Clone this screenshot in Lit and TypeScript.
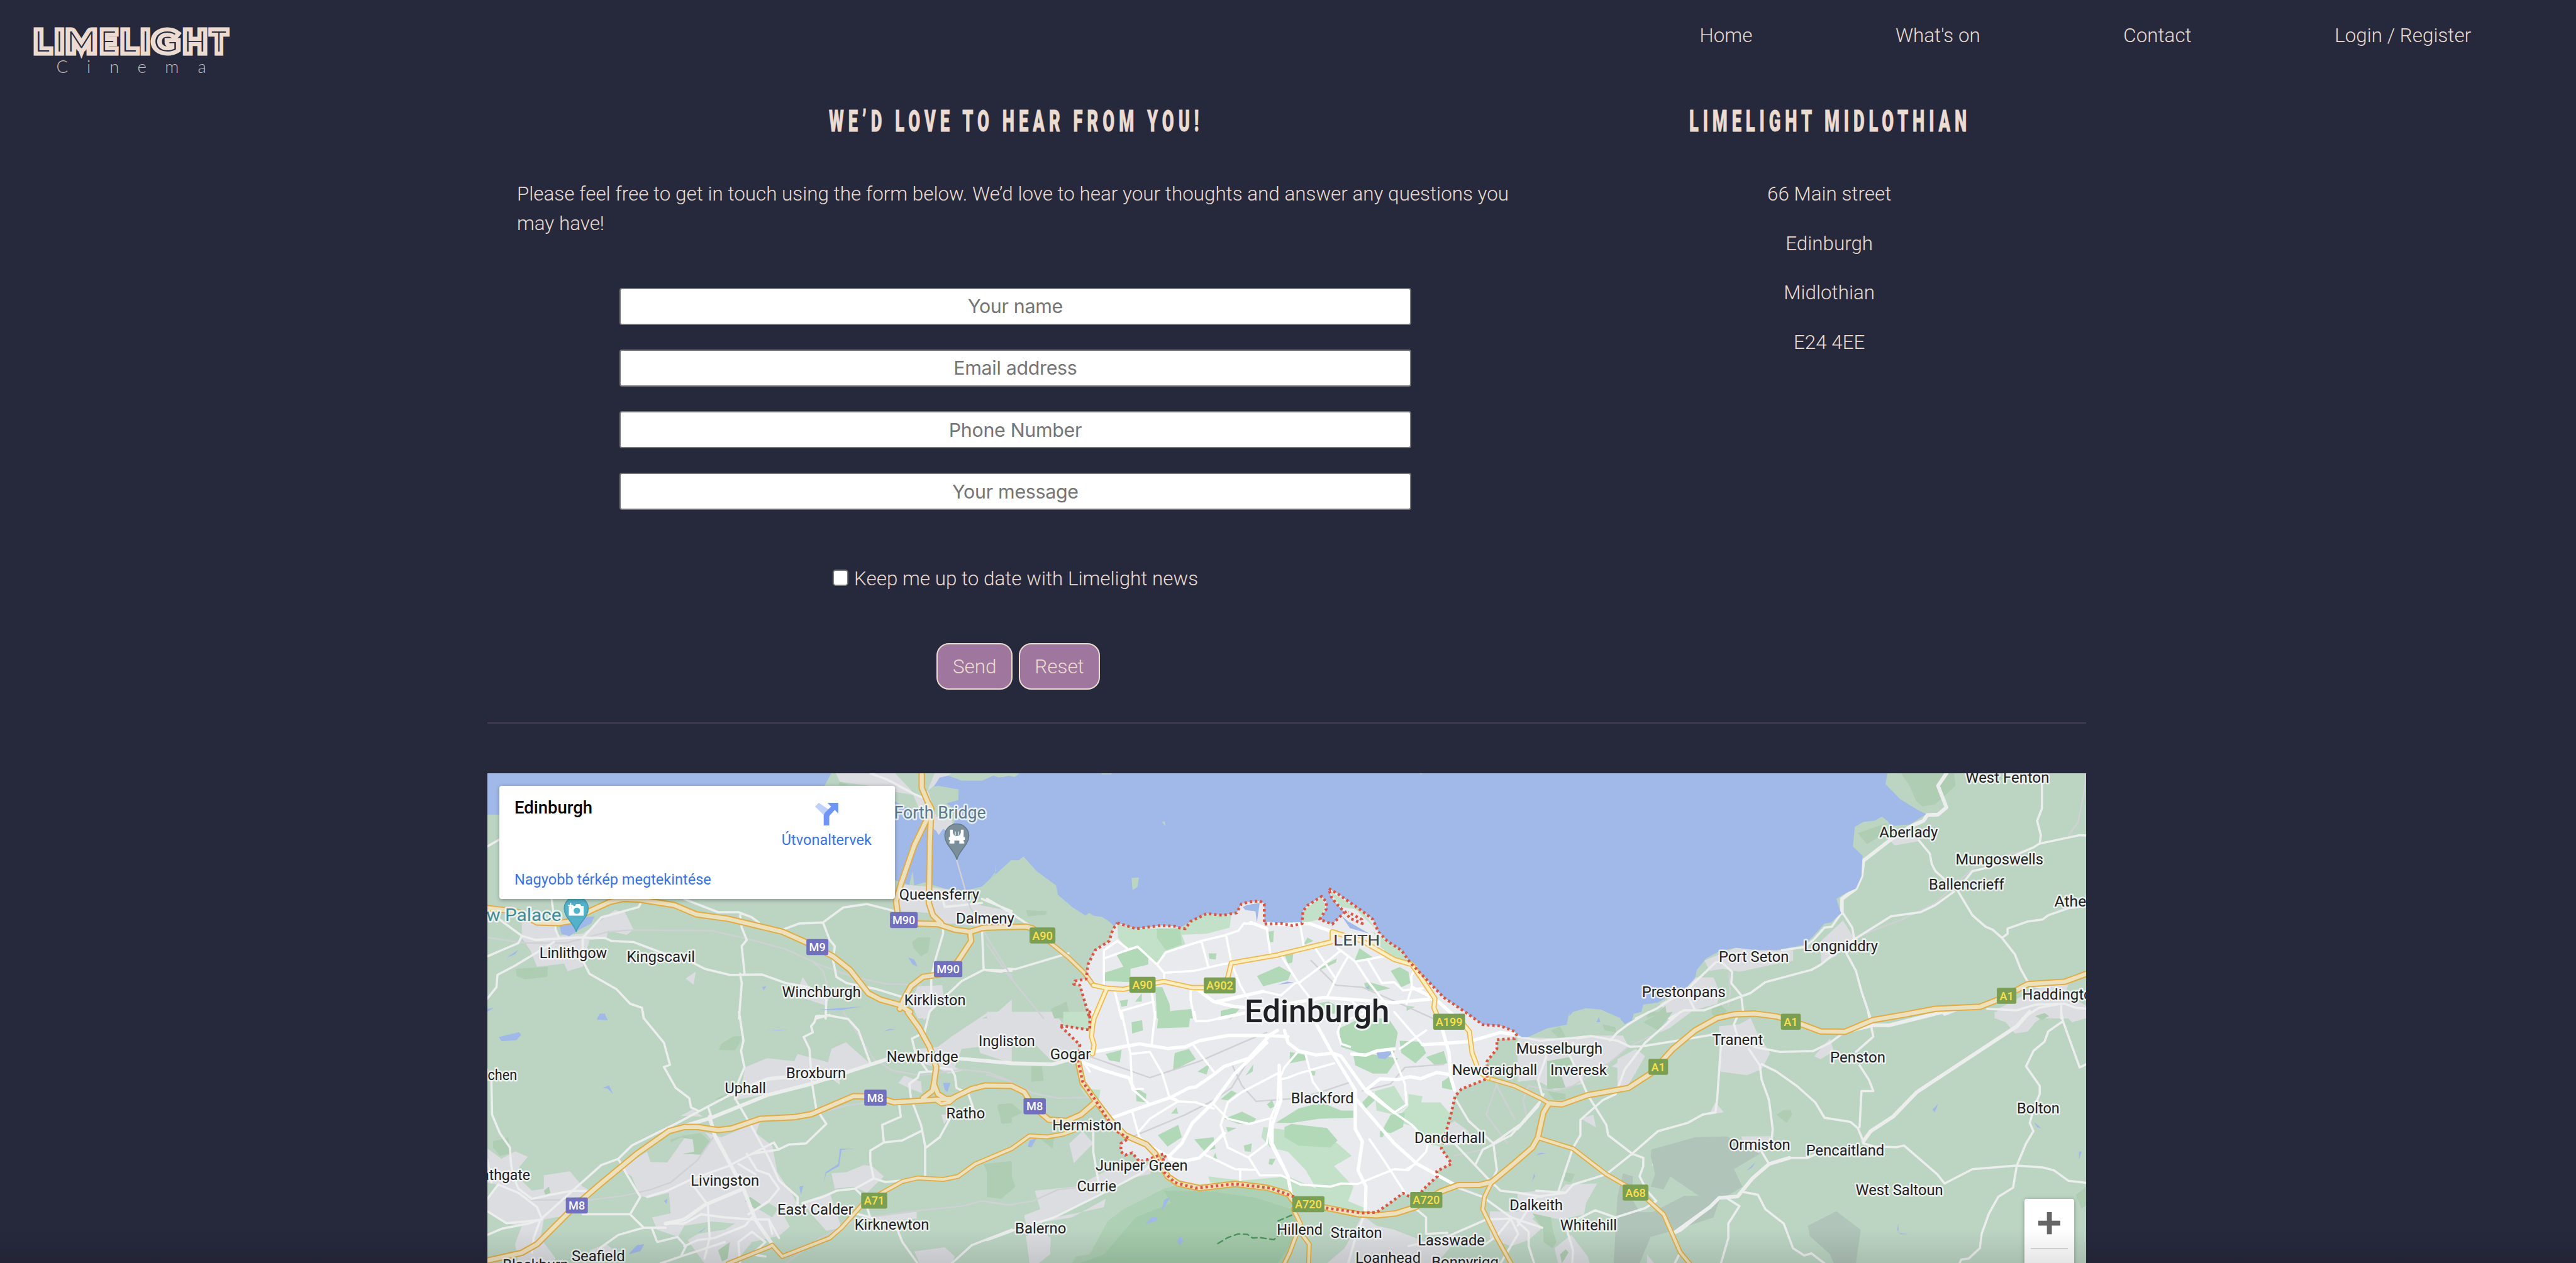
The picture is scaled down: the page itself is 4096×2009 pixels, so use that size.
import { LitElement, html, svg, css, unsafeCSS } from "lit";
import { customElement } from "lit/decorators.js";

/** Page scale: layout lengths are given on a 4176-unit wide sheet. */
const SCALE = 4096 / 4176;
const u = (n: number) => unsafeCSS(`${+(n * SCALE).toFixed(3)}px`);

/** Map survey sheets: origin and horizontal / vertical unit. */
type Sheet = [number, number, number, number];
const V = 1 / 3;
const SHEETS: Record<string, Sheet> = {
  A: [780, 1230, 860 / 1568, V],
  B: [1600, 1230, 900 / 1568, V],
  C: [2460, 1230, 940 / 1568, V],
  D: [780, 1640, 860 / 1568, V],
  E: [1600, 1640, 900 / 1568, V],
  F: [2460, 1640, 940 / 1568, V],
};
const ORIGIN = [790, 1253];

const at = (s: string, x: number, y: number): [number, number] => {
  const [ox, oy, kx, ky] = SHEETS[s];
  return [+(ox + x * kx - ORIGIN[0]).toFixed(1), +(oy + y * ky - ORIGIN[1]).toFixed(1)];
};

/** "A 1,2 3,4 B 5,6 | A ..." to an SVG path; "|" lifts the pen. */
const trace = (src: string, close = false) =>
  src
    .split("|")
    .map((part) => {
      let s = "A";
      const pts: string[] = [];
      for (const tok of part.trim().split(/\s+/)) {
        if (tok in SHEETS) s = tok;
        else {
          const [x, y] = tok.split(",").map(Number);
          pts.push(at(s, x, y).join(" "));
        }
      }
      return "M" + pts.join("L") + (close ? "Z" : "");
    })
    .join("");

const COAST_WEST =
  "A 1223,590 1265,612 1275,545 1280,615 1310,600 1370,630 1430,640 1480,620 1500,590 1522,545 1522,510 1568,490 B 0,598 23,560 26,510 65,492 90,492 103,474 140,545 195,615 200,660 240,720 278,762 288,748 300,762 325,768 345,790 360,815";
const SHORE =
  "B 368,797 420,825 490,810 530,813 545,822 560,825 575,790 620,752 665,760 705,748 718,705 740,695 770,690 783,705 783,803 830,800 862,810 890,800 892,740 905,712 945,668 958,695 958,730 940,780 975,803 1010,745 985,700 972,670 965,630 990,655 1060,740 1090,780 1105,840 1130,885 1170,930 1195,990 1240,1070 1290,1160 1350,1230 E 1350,0 1370,25 1400,62 1450,68 1490,95";
const INLAND =
  "E 1495,110 1490,130 1440,135 1440,180 1412,240 1412,325 1340,375 1322,410 1310,500 1300,560 1283,665 1312,738 1270,775 1272,800 1240,850 1225,880 1195,900 1175,882 1130,940 1100,975 1060,978 960,955 860,895 800,857 700,837 590,857 530,830 500,780 480,725 505,715 500,690 475,705 450,720 430,728 410,685 390,697 378,680 378,640 400,615 370,585 340,520 310,440 270,340 257,240 262,160 205,65 290,88 290,0 B 290,1262 262,1100 245,1095 248,1080 280,1070 285,1000 305,930 345,885 355,830 368,797";
const COAST_EAST =
  "E 1495,105 1510,122 F 0,123 28,123 80,80 133,62 140,0 C 140,1250 150,1230 185,1212 225,1218 275,1258 335,1230 340,1195 380,1185 410,1150 455,1115 480,1065 485,1025 510,970 545,935 590,918 650,930 700,930 775,903 800,860 830,800 848,795 875,750 862,680 890,650 915,630 930,570 933,470 907,425 912,330 935,305 965,300 985,280 1000,300 1010,325 1060,318 1105,268 1080,245 1035,195 995,122 1000,69";
const NORTH =
  "A 1530,69 1480,105 1420,105 1380,80 1355,90 1337,135 1350,130 1411,148 1410,200 1375,215 1395,240 1400,300 1380,350 1365,340 1352,370 1345,350 1310,300 1300,250 1265,245 1223,205";

const SEA = `${COAST_WEST} ${SHORE} ${COAST_EAST} ${NORTH} | A 18,69 1035,69 1015,128 1015,270 18,270`;
const ISLANDS =
  "B 494,305 502,303 504,327 | B 408,578 429,576 425,622 411,638 | B 35,69 92,69 78,87 60,80 46,87 | B 322,69 352,69 350,74 325,74 | B 1222,69 1228,69 1226,75 | A 1495,69 1568,69 1568,78 1530,90";

const URBAN =
  "A 1048,69 1223,69 1270,150 1310,300 1352,368 1395,330 1390,290 1345,280 1320,150 1340,69 1390,69 1330,140 1300,180 1223,160 1140,128 1060,110 | A 120,795 210,795 225,860 300,850 395,735 425,745 450,830 430,855 375,835 370,875 320,880 300,1010 255,1032 245,995 165,1010 145,930 120,870 | A 604,1068 634,1034 628,1098 | A 950,1060 970,1110 1030,1150 1020,1200 930,1150 | A 1235,610 1320,620 1400,640 1440,700 1568,740 1568,812 1490,820 1400,800 1345,800 1340,750 1240,740 1225,700 | A 1290,1105 1362,1100 1368,1160 1330,1225 1320,1262 1290,1262 1270,1180 | A 1568,1170 1530,1225 1480,1262 1568,1262 | D 1285,0 1325,0 1310,40 | D 1500,0 1568,0 1568,250 1530,230 1475,200 1470,170 1420,180 1400,270 1425,285 1380,300 1345,270 1300,250 1290,180 1350,170 1390,120 | D 1233,345 1250,310 1300,340 1303,395 1270,375 | D 745,430 770,360 780,270 845,225 925,240 935,205 1025,245 1035,180 1078,148 1148,250 1060,320 1060,355 1040,330 975,345 845,400 | D 590,505 625,475 655,510 | D 660,585 710,610 825,530 812,590 860,650 875,780 920,890 935,940 880,960 850,930 820,960 860,1000 880,950 912,1045 880,1090 800,1120 760,1200 720,1224 660,1224 610,1110 640,1080 720,1060 750,1030 680,1020 600,1040 582,1095 520,1060 505,1000 560,980 555,880 495,905 468,895 445,800 410,760 490,680 500,730 550,732 600,615 625,620 630,680 655,690 680,620 | D 185,795 262,775 300,850 330,875 320,895 260,905 255,990 185,1010 175,1100 220,1200 205,1224 110,1224 100,1130 120,1040 75,1030 18,970 18,905 50,840 18,830 18,665 60,715 100,678 138,705 115,750 100,790 150,870 185,860 | D 1035,785 1080,780 1130,745 1155,750 1190,800 1140,880 1100,850 1045,860 | D 950,925 1030,880 1065,1050 1020,1065 985,1000 | D 1170,995 1287,972 1287,1005 1170,1020 | D 1280,1165 1370,1145 1400,1190 1390,1224 1295,1224 | D 1360,500 1390,500 1368,545 | D 320,1160 370,1130 400,1170 330,1190 | E 0,0 190,0 215,60 255,150 262,200 180,235 120,130 60,160 0,200 | E 232,640 270,580 300,640 245,735 | E 135,870 250,850 340,770 470,740 460,790 400,810 300,900 190,1000 250,980 330,950 335,910 240,1000 110,1035 105,990 150,960 | E 110,1090 160,1070 180,1100 178,1180 145,1224 120,1224 | E 1010,1150 1060,990 1100,1040 1150,1060 1240,1120 1300,1080 1330,1100 1270,1224 960,1224 | E 1280,580 1320,530 1360,580 1370,640 1290,650 | E 1420,970 1520,975 1568,1050 1530,1110 1480,1140 1420,1100 | F 0,123 130,130 180,115 285,115 300,170 250,245 180,300 175,350 100,380 50,330 0,340 | F 270,230 320,180 345,215 300,355 270,380 | F 255,265 320,190 320,300 | F 545,70 600,60 630,30 650,110 683,200 660,280 620,308 548,290 | F 802,215 845,130 855,190 820,230 | F 518,500 535,440 558,488 | F 172,520 205,500 212,562 | F 605,605 690,605 650,690 620,710 | F 362,740 410,742 376,788 | F 1290,0 1440,0 1400,50 1380,95 1345,105 1320,50 1290,30 | F 1470,0 1538,0 1538,30 1500,50 | F 0,880 60,870 110,880 130,840 215,835 185,930 180,985 120,1010 50,990 20,1040 0,1010 | F 100,1150 145,1085 190,1190 195,1224 110,1224 | F 350,1180 370,1224 350,1224 | F 420,0 470,0 410,80 385,100 | C 1290,1262 1300,1215 1400,1120 1490,1095 1480,1140 1538,1200 1538,1262 | C 818,890 880,785 910,870 860,960 822,990 | C 505,980 590,918 650,930 745,930 745,980 690,1000 600,1035 555,1020 520,1030 | C 455,1115 480,1062 530,1062 548,1140 540,1190 480,1220 430,1262 405,1240 385,1190 | C 1005,395 1060,320 1085,400 1020,420";

const WOODS =
  "A 102,1020 197,1010 195,1060 130,1072 105,1055 | A 1274,890 1290,868 1328,868 1320,940 1300,960 1278,920 | A 1060,110 1090,128 1055,128 | B 110,735 170,740 165,758 115,765 | B 180,1215 225,1180 235,1262 190,1262 | D 702,185 710,155 745,120 770,118 765,150 750,188 | D 560,620 600,600 650,590 675,630 650,695 595,690 630,680 625,620 590,610 560,635 | D 35,630 80,610 85,690 55,700 35,660 | D 690,425 730,395 725,425 | D 1525,460 1568,445 1568,540 1540,545 | D 1485,740 1568,725 1568,870 1525,892 | D 185,870 200,850 205,880 190,890 | D 700,1160 735,1120 728,1200 712,1215 | D 780,920 795,900 830,940 810,960 | E 0,770 60,755 80,850 40,910 0,900 | E 30,450 70,445 100,490 40,540 | E 125,265 155,265 160,335 125,340 | E 145,610 190,600 185,665 | F 340,50 380,10 420,0 380,90 | F 90,90 115,70 130,120 110,125 | F 230,60 265,75 265,100 235,90 | F 80,240 140,220 155,250 115,290 130,370 80,375 | F 700,500 720,478 740,480 742,500 728,540 | F 80,385 130,400 130,425 100,430 | F 130,780 155,790 145,830 125,820 | F 1400,20 1425,5 1437,20 1418,40 | F 1510,890 1538,850 1538,940 1525,958 | F 40,980 90,1000 95,1060 105,1120 95,1150 70,1120 70,1060 | F 115,1180 130,1155 138,1170 120,1224 | C 1037,69 1180,69 1184,130 1130,220 1095,230 1078,205 1060,130 | C 920,360 1000,310 975,380 945,415 | C 525,1215 545,1190 567,1225 540,1262 525,1240 | C 375,1240 400,1200 405,1262 | F 350,0 400,0 350,30";

const HILLS =
  "E 250,1190 290,1180 340,1020 385,960 500,860 540,840 600,860 700,840 790,862 860,905 875,960 880,1060 860,1130 850,1224 240,1224";
const HILLS_DARK =
  "E 500,870 640,875 760,905 860,960 880,1060 850,1150 820,1224 260,1224 330,1180 420,1000 520,930";
const MOOR =
  "F 362,670 400,650 480,610 565,605 605,640 655,690 585,765 608,850 545,920 530,1000 430,1060 360,1095 330,1224 260,1224 270,900 285,785 312,800 310,910 330,975 365,975 450,895 490,895 413,800 395,865 360,850 372,790 360,700 | F 785,1040 862,970 928,1060 915,1224 855,1224 845,1180 790,1090";

const LAWNS =
  "B 368,800 420,825 545,822 575,790 620,752 690,762 685,820 620,850 550,855 560,900 500,940 480,1000 425,910 395,920 370,870 | B 890,800 892,740 945,670 955,720 940,780 | B 965,640 1060,740 1100,830 1040,730 1000,720 | B 1090,840 1170,930 1195,990 1125,950 | B 1100,900 1130,890 1190,980 1170,990 | E 780,560 870,580 940,600 990,640 1030,700 980,750 1035,850 1020,920 1075,960 1060,978 960,955 860,895 800,857 630,830 625,800 720,820 850,800 930,860 900,770 850,680 800,660 775,610 | E 1095,385 1150,360 1185,460 1150,500 1100,480 | E 1200,440 1280,440 1310,500 1290,660 1240,640 1210,560 1150,530 | E 1190,400 1230,410 1220,490 1190,480 | E 262,370 320,380 315,440 280,410 | E 215,0 285,0 288,80 210,65 250,150 215,80";

const PARKS =
  "B 365,950 425,920 455,965 455,1000 405,1020 405,1085 330,1080 330,1040 385,1010 | B 480,825 545,825 550,900 505,930 480,870 | B 626,945 648,945 646,975 628,972 | B 762,1055 825,1008 858,1040 850,1075 780,1105 | B 893,905 905,868 922,885 | B 840,950 865,945 862,990 850,995 | B 938,1015 988,970 985,990 942,1025 | B 1038,980 1052,920 1090,965 1045,985 | B 1140,1030 1165,1012 1190,1035 1195,1090 1170,1110 | B 795,840 810,835 808,890 798,890 | B 475,1110 495,1110 515,1190 520,1262 480,1262 | B 375,1175 398,1170 395,1200 380,1205 | B 418,1180 437,1140 437,1180 | B 1065,1090 1080,1085 1140,1115 1100,1130 1070,1120 | B 1185,1200 1208,1205 1185,1225 | B 925,1190 965,1180 1000,1210 980,1240 940,1230 | B 520,1225 580,1215 585,1262 510,1262 | E 485,0 575,0 570,75 480,80 | E 408,50 438,40 440,90 410,105 | E 335,205 380,185 375,245 345,235 | E 530,200 570,180 590,230 525,285 | E 595,290 630,250 620,305 | E 855,195 900,210 900,235 855,250 | E 730,310 752,255 750,290 | E 995,80 1020,60 1060,25 1135,35 1160,100 1150,200 1090,195 1060,205 1000,170 | E 1165,140 1225,145 1240,200 1210,250 1170,200 | E 1035,215 1080,205 1160,225 1130,300 1090,300 1040,260 | E 912,285 928,290 925,310 912,305 | E 420,370 450,400 448,440 422,435 | E 660,425 690,382 705,395 680,430 | E 520,495 535,465 540,495 | E 670,520 720,485 760,520 750,545 710,545 | E 815,540 880,470 945,440 1000,480 1035,480 1035,515 940,520 860,540 | E 840,560 860,545 960,565 990,625 970,660 880,650 840,610 | E 482,600 540,550 550,610 510,655 | E 585,620 640,610 645,665 615,680 | E 725,650 748,640 745,680 728,678 | E 795,740 798,715 815,715 805,745 | E 635,720 645,685 650,715 | E 1060,440 1090,385 1095,430 1070,470 | E 1115,580 1140,500 1180,490 1175,560 1140,590 | E 1110,610 1110,580 1125,575 1118,608 | E 1240,220 1290,190 1300,250 1265,260 | E 1285,340 1310,310 1315,380 1285,370 | E 675,560 705,565 680,585 | E 790,450 805,430 812,460 800,470 | B 660,1225 720,1200 690,1262 660,1262";

const PONDS =
  "A 232,812 265,800 300,770 335,765 325,800 290,830 260,862 237,850 | A 75,965 110,928 100,950 | A 342,1262 350,1240 365,1240 370,1262 | D 342,38 350,8 365,8 374,40 | D 52,122 112,98 118,112 104,138 60,143 | D 358,370 378,358 390,400 372,372 | D 845,345 885,360 905,335 885,360 870,355 | D 1365,345 1387,345 1378,390 1370,380 | D 1018,780 1055,740 1060,665 1105,665 1065,672 1058,750 1020,785 1012,835 | D 435,1180 460,1135 482,1130 470,1165 | D 540,920 550,908 548,935 | D 940,850 952,845 945,890 | D 640,1075 668,1045 650,1070 | E 1100,200 1120,185 1145,200 1125,230 1105,225 | E 493,965 500,915 517,900 505,940 | E 447,1035 465,998 480,1000 480,1015 | E 537,1115 545,1092 555,1112 545,1135 | E 115,655 120,625 140,615 125,660 | E 1540,820 1545,785 1548,800 | F 278,0 315,0 310,40 290,60 278,35 | F 213,50 220,25 224,50 | F 618,775 644,728 635,755 | F 50,698 62,685 77,688 | F 1122,475 1138,447 1128,488 | F 1396,535 1417,567 1405,560 | F 1518,720 1518,680 1526,678 | F 38,835 45,787 42,815 | F 1026,1060 1030,1030 1030,1075 1057,1082 1035,1082 | A 830,1110 843,1103 835,1125 | A 1262,965 1280,975 1290,1010 1275,1000 | A 995,1220 1130,1203 1060,1222 | A 18,1215 37,1210 18,1230 | D 842,88 908,86 880,90 | D 1190,95 1205,83 1225,83 | B 820,1098 848,1083 868,1088 | B 1070,1115 1078,1100 1078,1130 | B 1000,760 1020,790 1080,850 1025,822 | B 722,720 735,710 770,700 762,795 758,740 730,735";

const RAILS =
  "A 18,868 130,895 250,895 375,840 440,832 680,835 800,880 900,925 1000,1000 1100,1060 1200,1095 1300,1098 | A 980,985 1010,1030 1030,1130 | D 150,915 320,915 420,895 500,865 560,830 640,720 690,600 | D 960,512 1080,455 1130,445 | D 1070,0 1110,100 1160,230 1215,285 1300,310 1420,280 1500,295 1568,340 | D 1140,1000 1300,965 1420,945 1480,920 1568,940 | D 900,1224 1000,1100 1140,990 | E 0,305 60,335 130,395 200,420 300,415 400,392 | E 0,925 60,940 130,920 200,865 250,855 | E 260,210 460,320 600,240 720,150 790,100 | B 0,900 60,1050 160,1262 | B 915,980 985,1100 1060,1110 1180,1200 1260,1262 | E 480,0 600,0 | E 400,615 560,500 640,430 690,370 740,230 790,120 | E 690,250 720,360 760,435 880,420 960,380 1030,340 | E 1060,385 1140,350 1180,270 1290,255 | F 380,100 300,170 240,260 150,360 100,385 30,360 15,430 25,510 | C 910,870 1040,780 1130,700 1250,500 1380,440 | C 1538,69 1530,180 1515,310 1490,370 | C 572,1040 575,1130 570,1200 | E 1440,350 1410,500 1470,640 | E 1440,360 1490,520 | E 1320,700 1400,670 1440,640";

const LANES =
  "A 18,425 55,390 | A 208,681 220,830 230,870 | A 600,681 700,745 760,745 800,770 820,795 | A 765,760 770,820 785,880 770,910 778,1040 | A 18,1165 45,1110 48,1050 100,1005 170,935 215,890 | A 18,960 60,930 110,895 120,860 70,800 18,735 | A 120,860 160,880 280,868 365,870 385,885 450,890 530,940 600,970 660,1020 735,1050 830,1048 900,1090 970,1110 | A 300,870 355,770 465,720 475,690 | A 300,870 300,980 320,1045 400,1120 440,1190 475,1210 480,1262 | D 478,0 480,30 540,150 558,258 540,268 575,370 615,420 620,465 640,480 | A 765,1045 770,1090 762,1262 | D 762,0 775,140 768,190 778,270 755,360 | A 890,830 940,800 1010,795 1070,722 1140,705 1223,740 | A 1010,795 1030,880 1045,910 1040,980 1050,1060 1080,1090 1170,1120 1250,1160 | A 1020,1170 1018,1262 | A 990,1262 1030,1245 | D 1115,90 1085,35 1020,15 990,20 985,50 975,70 980,100 953,122 970,180 978,350 990,470 1020,545 960,640 910,645 878,670 865,635 | D 1115,90 1150,250 | A 1365,800 1365,850 1345,960 1330,1060 1330,1150 | A 1480,820 1485,1025 1420,1080 1330,1220 D 1325,0 1310,100 1273,130 1285,210 1320,290 1345,290 | A 1485,1025 1568,1030 B 0,1028 40,1035 60,1020 80,1022 230,945 | A 1365,690 1370,720 1480,700 | A 1480,680 1568,740 | A 1150,69 1200,100 1280,170 1310,190 | B 0,680 60,740 120,810 | D 18,1085 60,1055 140,1030 175,1010 270,870 355,745 405,715 445,650 580,540 665,465 740,400 | D 405,715 430,790 470,900 440,985 480,1050 545,1050 | D 30,340 32,500 55,590 85,660 88,740 95,800 110,860 150,910 | D 18,970 75,1028 130,1020 180,1010 165,950 110,880 50,840 18,910 | D 150,910 205,890 270,870 310,872 | D 300,985 440,985 | D 175,1010 155,1100 150,1170 | D 18,720 30,830 | D 480,1050 405,1085 350,1150 | D 505,1055 520,1120 580,1095 605,1140 590,1190 530,1224 | D 490,900 550,870 620,815 730,750 865,635 | D 620,830 670,940 675,1100 660,1200 | D 545,1030 600,1030 650,985 720,1000 800,1010 850,1010 880,1100 | D 750,420 800,560 850,710 880,820 935,900 935,940 | D 785,690 815,770 850,790 880,860 850,920 790,985 | D 760,740 810,790 | D 600,1140 640,1110 690,1100 780,1040 800,1000 | D 765,1224 760,1120 800,1070 840,1120 800,1180 840,1190 | D 590,1190 720,1120 | D 850,1010 860,1080 | D 670,460 680,510 | D 880,670 800,690 | D 1235,450 1240,510 1185,550 1190,635 1150,675 1150,730 1160,810 1195,828 1245,820 | D 1190,635 1245,625 1300,580 | D 1270,420 1300,550 1312,650 1312,810 | D 1385,520 1355,610 1315,660 | D 1270,420 1265,350 1290,320 1295,295 1320,290 | D 1160,810 1105,860 1050,870 1010,900 950,930 | D 1105,860 1130,900 1150,1000 | D 1105,980 1150,1000 1230,1060 1245,1120 1290,1224 | D 1415,380 1440,400 1455,470 | D 1345,270 1390,280 1400,310 1405,370 1440,395 | D 1390,1224 1450,1135 1568,1060 | E 0,1110 80,1060 190,1000 330,880 440,780 470,730 | E 300,580 300,680 318,860 | E 1205,950 1240,1000 1240,1080 1300,1075 | E 1020,1224 1040,1100 1065,990 | E 1190,1140 1290,1100 1410,1010 1480,1005 | E 1480,1005 1440,1090 1400,1140 | E 1480,1010 1500,1080 1450,1224 | E 1320,850 1400,900 1480,1000 1568,1050 | E 1425,828 1450,870 1500,880 1568,900 | E 1320,640 1425,830 | E 1322,420 1360,530 1430,640 1440,770 1425,828 | E 1430,640 1520,530 | E 1380,740 1400,670 1480,600 1560,440 | F 0,1020 30,1070 30,1140 45,1224 | F 0,1040 50,900 130,880 | F 110,875 150,660 | F 50,870 130,880 150,840 240,790 310,690 380,580 460,540 500,500 535,488 540,420 550,160 | F 310,690 340,710 340,750 330,800 350,870 375,920 345,955 265,1000 210,965 160,1010 | F 310,690 245,600 240,550 190,405 165,300 140,210 150,150 | F 150,660 170,600 170,525 230,430 265,400 290,280 345,150 440,0 | F 420,1080 440,1065 520,950 545,905 595,898 635,810 680,740 735,710 785,710 810,690 | F 608,875 650,890 670,960 720,1030 745,1150 775,1185 795,1175 830,1224 | F 565,905 600,945 570,1030 570,1100 550,1224 | F 680,740 660,680 | F 688,610 690,570 680,430 660,330 655,260 625,180 | F 660,255 700,290 755,360 805,440 830,515 900,535 920,565 935,630 | F 925,560 930,385 962,385 950,330 925,260 | F 915,195 962,120 955,60 948,0 | F 935,640 965,655 1025,658 1045,650 1135,790 1155,835 1230,765 1350,748 1420,757 1450,770 1490,822 1538,832 | F 1350,748 1340,855 1300,900 1275,980 1255,1080 1250,1150 1220,1200 1200,1205 1195,1224 | F 1350,748 1375,640 1395,580 1385,540 1400,450 1412,400 1412,360 1375,265 1395,190 1425,145 1435,95 1475,45 1520,270 1538,255 | F 1475,45 1470,0 | F 600,0 585,60 600,150 | F 70,430 55,330 75,230 80,200 | F 0,570 55,460 70,400 | F 0,120 60,140 160,125 200,118 | F 640,170 710,195 800,190 845,150 885,97 | F 530,110 430,140 345,165 305,170 270,140 200,118 160,130 | F 355,0 300,60 270,100 250,140 | F 130,1040 150,1160 148,1224 | F 440,1170 425,1224 | C 320,1262 375,1215 465,1110 535,990 550,985 580,1035 578,1090 605,1150 610,1230 | C 410,1262 450,1222 505,1222 630,1138 670,1085 795,1025 820,1000 890,900 1010,765 1090,745 1130,710 1180,645 | C 460,1150 480,1222 | C 715,930 775,915 800,880 830,820 850,815 875,750 | C 880,750 905,820 910,870 | C 885,930 915,1030 930,1130 955,1262 | C 1190,640 1230,760 1265,815 1285,830 1310,870 1345,950 1360,1020 1385,1100 | C 1310,870 1325,850 1325,825 1380,790 1420,780 1435,760 1490,725 1538,715 | C 1155,585 1130,545 1120,510 1115,460 1085,395 | C 1210,590 1230,545 1280,525 1350,465 1395,430 1410,412 1520,370 1538,372 | C 1412,412 1415,370 1405,300 1418,240 1418,115 | C 1270,1215 1350,1222 1400,1195 1480,1190 1510,1210 1538,1215 | C 1365,1262 1410,1210 1470,1190 1470,1262 | C 1385,1100 1410,1110 1480,1095";

const LANES_WIDE =
  "D 560,575 680,515 845,405 975,350 1200,230 | D 740,400 850,325 960,310 | D 675,510 690,600 775,860 810,1010 860,1130 | D 545,1030 600,1010 660,940 775,860 | D 1400,225 1568,250 E 65,250 185,255 235,230 | F 420,1080 520,950 545,905 595,898 635,810 680,740 735,710 | F 935,630 955,580 1015,510 1080,390 1350,70 1385,0 | F 885,97 960,65 1005,65 1150,0 C 1155,1240 1190,1215 | C 1160,69 1137,130 1160,235 1137,270 1108,272 1098,300 1060,330 1010,390 935,495 930,570 915,630 877,680 877,750";

const STREETS =
  "B 330,970 330,1110 | B 330,970 425,912 480,1000 505,940 605,885 670,858 710,835 725,800 750,800 | B 330,970 330,930 368,885 395,920 | B 480,1000 500,1040 500,1080 | B 500,1040 585,1030 660,1000 688,992 | B 605,885 625,1010 | B 675,855 690,990 | B 790,825 800,950 | B 885,810 895,915 | B 360,1125 380,1262 | B 380,1225 470,1180 | B 465,1130 475,1262 | B 600,1115 575,1125 575,1170 585,1262 | B 690,992 715,1100 740,1175 | B 830,955 880,1090 920,1180 945,1250 | B 925,915 985,1070 960,1160 | B 880,1090 950,1000 1000,930 | B 990,920 1040,985 1080,1090 1130,1200 | B 1040,985 1120,960 1118,930 | B 1018,965 980,1080 | B 1075,975 1115,1090 1150,1085 1175,1125 1230,1115 | B 1210,1010 1198,1060 1200,1110 1185,1190 | B 660,1180 780,1130 830,1150 870,1090 885,1085 | E 300,0 300,5 | B 1020,1165 1090,1262 | E 380,0 405,205 410,375 460,450 | E 475,0 465,160 | E 405,205 460,195 495,300 515,415 | E 410,375 440,375 | E 580,155 640,290 | E 585,0 590,45 620,45 730,5 | E 880,190 840,270 825,330 850,320 880,300 980,250 | E 900,210 920,340 945,400 | E 825,260 820,440 800,520 800,640 830,740 | E 820,300 720,390 680,440 660,550 680,660 740,710 770,795 830,795 885,840 970,850 1000,835 1045,838 1150,765 1190,770 1240,680 1245,640 | E 640,450 680,520 740,545 805,515 | E 540,435 590,440 640,470 | E 540,435 460,520 430,580 | E 410,485 430,610 450,640 | E 610,690 700,765 760,768 | E 715,770 715,830 | E 740,705 790,640 800,540 | E 670,590 610,690 | E 1140,180 1180,350 1185,450 1150,490 | E 1080,385 1150,490 1200,550 1250,640 | E 1080,620 1120,720 1180,880 | E 1075,0 1000,50 990,100 1000,155 1025,170 | E 1150,0 1230,160 | E 1165,180 1240,90 | E 1210,740 1180,770 | E 270,240 290,290";

const STREETS_WIDE =
  "B 745,795 790,825 | B 795,800 830,805 910,800 975,840 | B 590,1115 640,1180 700,1205 780,1215 | B 650,1180 780,1130 | B 655,1262 850,1190 950,1160 1150,1185 1265,1165 | B 1200,1110 1265,1165 1320,1250 | E 300,195 430,155 510,178 560,170 600,140 680,115 790,115 850,120 | E 270,245 330,285 400,320 415,375 | E 345,520 410,480 520,415 570,370 590,365 640,305 670,265 740,225 800,110 820,90 | E 515,700 550,640 580,540 640,440 700,300 790,150 | E 515,415 535,430 | E 515,715 560,725 600,710 640,640 670,590 | E 840,90 850,150 880,190 930,210 975,200 985,225 1040,380 1040,420 1150,640 1215,740 1320,840 | E 930,60 975,200 1000,215 1070,385 1150,490 | E 1040,430 1040,570 1060,630 1048,770 1070,850 1068,985 | E 825,260 830,430 805,550 805,640 850,800 860,900 | E 1070,380 1110,325 1160,330 1195,315 1225,325 1270,295 1310,305 | E 1285,80 1305,200 1310,320 1320,380 | E 1230,160 1360,145 1450,100 1490,110 | E 1030,205 1070,210 1100,190 1150,180 | E 450,645 520,710";

const MOTORWAYS =
  "A 18,725 70,735 110,745 165,795 230,798 265,788 320,740 380,695 420,680 470,684 570,710 635,755 730,777 890,840 965,895 1040,960 1090,1025 1145,1140 1180,1170 1235,1195 1268,1230 D 1260,0 1295,80 1325,170 1345,270 1338,350 1333,385 1305,420 | D 1338,350 1350,400 1380,430 | A 1237,1215 1250,1165 1270,1105 1305,1060 1345,1050 1380,1040 1410,980 1448,885 1445,840 1400,830 1350,803 1290,800 | A 1445,840 1480,823 B 0,820 110,815 130,825 | A 1302,69 1302,140 1320,210 1318,290 1280,420 1240,610 1226,690 1230,740 | A 1320,210 1330,240 1326,400 1323,700 1335,760 1360,800 | E 257,240 270,345 310,440 350,530 390,600 450,645 475,690 490,740 510,800 540,835 600,857 700,837 790,855 850,885 870,930 950,950 1050,985 1100,990 1155,980 1210,950 1280,875 1330,843 1390,842 1425,828 1490,735 1540,660 1556,612 F 55,612 60,570 70,490 85,445 120,450 190,405 300,370 360,300 420,180 480,90 540,30 585,12 640,8 700,22 760,55 820,95 885,97 960,40 1050,12 C 1050,1242 1130,1215 1250,1205 1300,1170 1380,1095 1480,1083 1538,1045 | D 18,1210 120,1172 165,1130 280,940 350,840 460,690 555,580 600,560 640,560 700,575 740,567 825,520 925,512 975,498 1100,410 1165,412 1220,440 1320,430 1390,422 1450,375 1490,358 1568,360 E 105,390 130,460 175,525 225,530 265,500 305,440";

const TRUNKS =
  "F 55,612 150,665 240,790 340,895 395,985 440,1170 465,1224 | E 865,960 885,1030 870,1100 855,1170 840,1224 | E 880,1060 910,1130 908,1224 | E 1425,828 1405,900 1400,960 1440,1100 1480,1224 | D 730,1224 850,1145 860,1135 890,1190 1030,1100 1065,1050 1130,930 1245,825 1290,808 1365,815 1410,800 1460,740 1568,665 E 120,603 170,608 215,595 285,550 | E 1415,322 1490,360 1568,425 F 85,445 | D 1340,425 1360,448 1385,440 1410,405 | B 130,825 180,895 230,965 275,1040 300,1100";

const CITY_TRUNKS =
  "B 300,1100 340,1115 385,1120 440,1100 500,1082 580,1112 660,1112 680,1062 690,992 820,953 975,888 975,840 1060,885 1120,945 1150,975 1200,1000 1240,1100 1265,1165 1262,1210 1275,1262 E 1345,60 1362,95 1370,200 1390,290 1415,322 | B 337,1120 302,1262 E 298,70 295,120 302,160 298,205";

type Label = [string, number, number, number, string];
const PLACES: Label[] = [
  ["A", 1237, 1470, 683, "Queensferry"], ["A", 1405, 1574, 801, "Dalmeny"],
  ["A", 174, 370, 968, "Linlithgow"], ["A", 432, 630, 988, "Kingscavil"],
  ["A", 891, 1120, 1157, "Winchburgh"], ["A", 1252, 1430, 1199, "Kirkliston"],
  ["C", 1213, 1436, 114, "West Fenton"], ["C", 980, 1135, 382, "Aberlady"],
  ["C", 1186, 1420, 514, "Mungoswells"], ["C", 1114, 1314, 636, "Ballencrieff"],
  ["C", 776, 973, 934, "Longniddry"], ["C", 546, 732, 988, "Port Seton"],
  ["C", 338, 561, 1157, "Prestonpans"], ["C", 1366, 1575, 1171, "Haddington"],
  ["C", 1453, 1727, 718, "Athelstaneford"],
  ["D", -92, 104, 333, "Torphichen"], ["D", 722, 840, 395, "Uphall"],
  ["D", 903, 1076, 321, "Broxburn"], ["D", 1200, 1408, 243, "Newbridge"],
  ["D", 1472, 1635, 165, "Ingliston"], ["D", 1376, 1487, 517, "Ratho"],
  ["D", -25, 143, 818, "Bathgate"], ["D", 621, 820, 846, "Livingston"],
  ["D", 877, 1098, 985, "East Calder"], ["D", 1105, 1322, 1060, "Kirknewton"],
  ["D", 269, 423, 1213, "Seafield"], ["D", 65, 256, 1255, "Blackburn"],
  ["E", 180, 291, 231, "Gogar"], ["E", 186, 378, 577, "Hermiston"],
  ["E", 308, 565, 772, "Juniper Green"], ["E", 256, 363, 874, "Currie"],
  ["E", 81, 222, 1078, "Balerno"], ["E", 860, 1034, 446, "Blackford"],
  ["E", 1315, 1552, 307, "Newcraighall"], ["E", 1209, 1405, 637, "Danderhall"],
  ["E", 820, 946, 1084, "Hillend"], ["E", 972, 1114, 1100, "Straiton"],
  ["E", 1218, 1404, 1136, "Lasswade"], ["E", 1042, 1223, 1221, "Loanhead"],
  ["E", 1257, 1443, 1244, "Bonnyrigg"],
  ["F", -2, 228, 202, "Musselburgh"], ["F", 90, 240, 307, "Inveresk"],
  ["F", 528, 662, 160, "Tranent"], ["F", 847, 993, 247, "Penston"],
  ["F", 1352, 1464, 495, "Bolton"], ["F", 573, 736, 671, "Ormiston"],
  ["F", 782, 990, 698, "Pencaitland"], ["F", 916, 1149, 892, "West Saltoun"],
  ["F", -20, 121, 964, "Dalkeith"], ["F", 117, 267, 1063, "Whitehill"],
];

type Shield = [string, number, number, number, string];
const SHIELDS: Shield[] = [
  ["A", 1208, 1290, 744, "M90"], ["A", 961, 1026, 876, "M9"], ["A", 1338, 1422, 983, "M90"],
  ["D", 1132, 1198, 378, "M8"], ["D", 250, 315, 903, "M8"], ["E", 103, 166, 420, "M8"],
  ["B", 120, 193, 819, "A90"], ["B", 402, 476, 1059, "A90"], ["B", 612, 702, 1062, "A902"],
  ["E", 1260, 1350, 9, "A199"], ["C", 1296, 1349, 1113, "A1"], ["F", 712, 766, 9, "A1"],
  ["F", 354, 407, 228, "A1"], ["F", 284, 354, 840, "A68"], ["D", 1123, 1200, 879, "A71"],
  ["E", 862, 953, 897, "A720"], ["E", 1195, 1286, 876, "A720"],
];

@customElement("area-map")
class AreaMap extends LitElement {
  static styles = css`
    :host {
      display: block;
      position: relative;
      overflow: hidden;
      background: #bcd5c3;
      font-family: Roboto, sans-serif;
      font-weight: 400;
    }
    .canvas { display: block; width: 100%; height: 100%; }
    path { stroke-linejoin: round; stroke-linecap: round; }
    .sea, .pond { fill: #a1b9e8; }
    .land { fill: #bcd5c3; }
    .urban { fill: #dcdde1; }
    .wood { fill: #aecdb2; }
    .hill { fill: #aed0b4; }
    .hill-dark { fill: #a4cbab; }
    .moor { fill: #b0c4b9; }
    .city { fill: #e8eaed; }
    .lawn { fill: #c3e1c8; }
    .park { fill: #b1d9b8; }
    .line { fill: none; }
    .rail { stroke: #cfd1d4; stroke-width: 2.4; }
    .lane { stroke: #eceeee; stroke-width: 3.6; }
    .lane-wide { stroke: #eceeee; stroke-width: 6; }
    .street { stroke: #fff; stroke-width: 3.6; }
    .street-wide { stroke: #fff; stroke-width: 5.4; }
    .m-edge { stroke: #e0ac43; stroke-width: 10.5; }
    .m-fill { stroke: #ede0bc; stroke-width: 6.5; }
    .t-edge { stroke: #e0ac43; stroke-width: 8; }
    .t-fill { stroke: #ede0bc; stroke-width: 4.6; }
    .c-edge { stroke: #efb84c; stroke-width: 8.5; }
    .c-fill { stroke: #fdeec2; stroke-width: 5; }
    .border { stroke: #db5543; stroke-width: 4.6; stroke-dasharray: 4 4.4; stroke-linecap: butt; }
    .trail { stroke: #4f9460; stroke-width: 2.4; stroke-dasharray: 9 6; }
    .place, .town, .district, .sight {
      fill: #202124;
      stroke: #f4f6f5;
      stroke-opacity: 0.9;
      stroke-width: 5;
      stroke-linejoin: round;
      paint-order: stroke;
      font-size: 24px;
    }
    .town { font-size: 51px; font-weight: 500; stroke-width: 6; }
    .district { fill: #3c4043; }
    .sight { font-size: 28px; }
    .bridge { fill: #5d7a8b; }
    .palace { fill: #3f8b98; }
    .shield { font-size: 18.5px; font-weight: 500; text-anchor: middle; fill: #fff; }
    .shield-a { fill: #fbdf4f; }
    .box-m { fill: #7070bf; }
    .box-a { fill: #7a9f52; }

    .card {
      position: absolute;
      left: ${u(20)};
      top: ${u(20)};
      width: ${u(641)};
      height: ${u(184)};
      box-sizing: border-box;
      padding: ${u(20)} ${u(38)} ${u(14)} ${u(24)};
      display: flex;
      justify-content: space-between;
      background: #fff;
      border-radius: ${u(4)};
      box-shadow: 0 ${u(2)} ${u(6)} rgba(0, 0, 0, 0.3);
    }
    .card-main { display: flex; flex-direction: column; justify-content: space-between; }
    .card-title { font-size: ${u(28)}; line-height: ${u(34)}; font-weight: 500; color: #000; }
    .link { font-size: ${u(24)}; line-height: ${u(34)}; color: #3a73e0; white-space: nowrap; }
    .route { display: flex; flex-direction: column; align-items: center; padding-top: ${u(8)}; }
    .route-icon { width: ${u(38)}; height: ${u(37)}; margin-bottom: ${u(7)}; }
    .zoom {
      position: absolute;
      left: ${u(2492)};
      top: ${u(690)};
      width: ${u(80)};
      height: ${u(162)};
      display: flex;
      flex-direction: column;
      align-items: center;
      background: #fff;
      border-radius: ${u(4)};
      box-shadow: 0 ${u(2)} ${u(8)} rgba(0, 0, 0, 0.3);
    }
    .plus { width: ${u(36)}; height: ${u(36)}; margin: ${u(22)} 0; }
    .rule { width: ${u(60)}; height: ${u(2)}; background: #dcdcdc; }
  `;

  private area(cls: string, d: string) {
    return svg`<path class=${cls} d=${trace(d, true)}></path>`;
  }
  private line(cls: string, d: string) {
    return svg`<path class="line ${cls}" d=${trace(d)}></path>`;
  }
  private label(cls: string, [s, x1, x2, y, text]: Label) {
    const [a, b] = at(s, x1, y);
    const [c] = at(s, x2, y);
    return svg`<text class=${cls} x=${a - 1} y=${b} textLength=${(c - a + 2).toFixed(1)} lengthAdjust="spacingAndGlyphs">${text}</text>`;
  }
  private shield([s, x1, x2, y, text]: Shield) {
    const [a, b] = at(s, x1, y);
    const [c] = at(s, x2, y);
    const m = text[0] === "M";
    return svg`<rect class=${m ? "box-m" : "box-a"} x=${a} y=${b} width=${c - a} height="26" rx="2.5"></rect>
      <text class="shield ${m ? "" : "shield-a"}" x=${(a + c) / 2} y=${b + 19.8}>${text}</text>`;
  }

  render() {
    return html`
      <svg class="canvas" viewBox="0 0 2592 795" preserveAspectRatio="none">
        ${this.area("urban", URBAN)} ${this.area("wood", WOODS)}
        ${this.area("hill", HILLS)} ${this.area("hill-dark", HILLS_DARK)} ${this.area("moor", MOOR)}
        ${this.line("rail", RAILS)} ${this.line("lane", LANES)} ${this.line("lane-wide", LANES_WIDE)}
        ${this.area("sea", SEA)} ${this.area("land", ISLANDS)}
        <path class="line rail" d=${trace("A 1405,490 1445,720 1500,880 1568,1060")}></path>
        ${this.area("city", `${SHORE} ${INLAND}`)}
        ${this.area("lawn", LAWNS)} ${this.area("park", PARKS)} ${this.area("pond", PONDS)}
        ${this.line("rail", "E 262,200 460,320 600,240 720,150 790,100 | E 400,615 560,500 640,430 690,370 740,230 | E 690,250 720,360 760,435 880,420 960,380 1030,340 | E 1060,385 1140,350 1180,270 1290,255 | B 915,980 985,1100 1060,1110 1180,1200 1260,1262")}
        ${this.line("street", STREETS)} ${this.line("street-wide", STREETS_WIDE)}
        ${this.line("t-edge", TRUNKS)} ${this.line("m-edge", MOTORWAYS)}
        ${this.line("t-fill", TRUNKS)} ${this.line("m-fill", MOTORWAYS)}
        ${this.line("c-edge", CITY_TRUNKS)} ${this.line("c-fill", CITY_TRUNKS)}
        ${this.line("border", `${SHORE} ${INLAND}`)}
        ${this.line("border", "B 1010,740 1025,775 1060,800 1058,780 1020,745")}
        ${this.line("trail", "E 652,1127 680,1098 710,1080 735,1082 750,1100 770,1098 810,1108 830,1080 818,1020 862,988")}
        ${SHIELDS.map((s) => this.shield(s))}
        ${PLACES.map((p) => this.label("place", p))}
        ${this.label("sight bridge", ["A", 1222, 1490, 290, "Forth Bridge"])}
        ${this.label("sight palace", ["A", -195, 235, 789, "Linlithgow Palace"])}
        ${this.label("district", ["B", 980, 1108, 907, "LEITH"])}
        ${this.label("town", ["B", 729, 1135, 1281, "Edinburgh"])}
        <g transform="translate(761 82)">
          <path d="M0 58C-3 44-19.500 34-19.500 19.500A19.500 19.500 0 0 1 19.500 19.500C19.500 34 3 44 0 58Z" fill="#7b8f9b" stroke="#647985" stroke-width="1.500"></path>
          <path d="M-11 9.500h4.500v5l2 4q4.500 3 9 0l2-4v-5h4.500v12h2v4.500h-2v3h1v3h-8v-5h-8v5h-8v-3h1v-3h-2v-4.500h2z" fill="#fff"></path>
          <path d="M-6.500 22h13M-2.500 13v5M2.500 13v5" stroke="#fff" stroke-width="1.200"></path>
        </g>
        <g transform="translate(144 200)">
          <path d="M0 57C-3 44-19.500 34-19.500 19.500A19.500 19.500 0 0 1 19.500 19.500C19.500 34 3 44 0 57Z" fill="#53b1c8" stroke="#3f9ab2" stroke-width="1.500"></path>
          <path d="M-5 15h3l2-3h6l2 3h4v16h-24v-12h4v-4zM-12 16h3v3h-3z" fill="#fff"></path>
          <circle cx="1" cy="23" r="5.200" fill="#53b1c8"></circle>
          <path d="M-9 11v7M-12.500 14.500h7" stroke="#fff" stroke-width="2" fill="none"></path>
        </g>
      </svg>
      <div class="card">
        <div class="card-main">
          <div class="card-title">Edinburgh</div>
          <div class="link">Nagyobb térkép megtekintése</div>
        </div>
        <div class="route">
          <svg class="route-icon" viewBox="0 0 38 37">
            <path fill="#bfd0fb" d="M6 0 0 6 14 20V25L18 14 24 12Z"></path>
            <path fill="#6e95f5" d="M20 0H38V18L32 11.500 25 19C23 21 23 22 23 25V37H14V24C14 19 15 17 18 14L26 6Z"></path>
          </svg>
          <div class="link">Útvonaltervek</div>
        </div>
      </div>
      <div class="zoom">
        <svg class="plus" viewBox="0 0 36 36"><path fill="#666" d="M14 0h8v14h14v8H22v14h-8V22H0v-8h14z"></path></svg>
        <div class="rule"></div>
      </div>
    `;
  }
}

@customElement("app-root")
class AppRoot extends LitElement {
  static styles = css`
    :host {
      display: block;
      position: relative;
      width: 100%;
      height: 100vh;
      overflow: hidden;
      background: #26293c;
      color: #ebdbd0;
      font-family: Roboto, sans-serif;
      font-weight: 300;
      font-size: ${u(32)};
      line-height: ${u(48)};
    }
    .page { display: flex; flex-direction: column; height: 100%; }
    .top {
      display: flex;
      justify-content: space-between;
      align-items: flex-start;
      height: ${u(150)};
      padding: 0 ${u(170)} 0 ${u(40)};
      flex: none;
    }
    .logo { width: ${u(360)}; height: ${u(140)}; }
    .mark {
      font-family: Lato, sans-serif;
      font-weight: 300;
      font-size: 46px;
      fill: #26293c;
      stroke: #ebdbd0;
      stroke-width: 13px;
      paint-order: stroke;
      stroke-linejoin: miter;
    }
    .sub { font-family: Lato, sans-serif; font-weight: 300; font-size: 28px; fill: #c9bdb8; }
    .nav { display: flex; gap: ${u(232)}; padding-top: ${u(34)}; }
    .content { width: ${u(2592)}; margin-left: ${u(790)}; flex: none; }
    .columns {
      display: grid;
      grid-template-columns: ${u(1712)} ${u(836)};
      justify-content: space-between;
      height: ${u(1021)};
      border-bottom: 2px solid #463c53;
    }
    .column { display: flex; flex-direction: column; align-items: center; }
    .left { padding: 0 ${u(48)}; }
    .right { padding-left: ${u(3)}; }
    .title { display: block; height: ${u(90)}; margin: ${u(10)} ${u(4)} 0 0; overflow: visible; }
    .title-text {
      font-family: Roboto, sans-serif;
      font-weight: 900;
      font-size: 49px;
      fill: #ebdbd0;
      stroke: #ebdbd0;
      stroke-width: 0.8px;
    }
    .intro { margin: ${u(41)} 0 0; width: 100%; }
    .form { display: flex; flex-direction: column; align-items: center; margin-top: ${u(80)}; width: 100%; }
    .field {
      box-sizing: border-box;
      width: ${u(1283)};
      height: ${u(60)};
      margin: 0 0 ${u(40)};
      padding: 0;
      border: 2px solid #767676;
      border-radius: ${u(4)};
      background: #fff;
      text-align: center;
      font-family: Inter, sans-serif;
      font-weight: 400;
      font-size: ${u(31)};
      letter-spacing: -0.01em;
    }
    .field::placeholder { color: #757575; opacity: 1; }
    .optin { display: flex; align-items: center; gap: ${u(9)}; margin-top: ${u(48)}; }
    .box {
      width: ${u(26)};
      height: ${u(26)};
      box-sizing: border-box;
      border: 2px solid #767676;
      border-radius: ${u(5)};
      background: #fff;
      margin-top: ${u(-4)};
    }
    .actions { display: flex; gap: ${u(10)}; margin: ${u(80)} 0 0 ${u(10)}; }
    .button {
      box-sizing: border-box;
      height: ${u(76)};
      padding: 0 ${u(24)};
      border: 2px solid #ebdbd0;
      border-radius: ${u(20)};
      background: #9f769e;
      color: #ebdbd0;
      font: inherit;
    }
    .address { display: flex; flex-direction: column; align-items: center; gap: ${u(32)}; margin-top: ${u(41)}; }
    .map { height: ${u(795)}; margin-top: ${u(81)}; }
    .shade {
      position: absolute;
      inset: auto 0 0 0;
      height: ${u(56)};
      background: linear-gradient(rgba(0, 0, 0, 0), rgba(0, 0, 0, 0.1));
      pointer-events: none;
    }
  `;

  private title(text: string, width: number) {
    const k = 0.57;
    return html`<svg class="title" viewBox="0 0 ${width} 90">
      <text class="title-text" transform="scale(${k} 1)" x="0" y="53" textLength=${width / k}>${text}</text>
    </svg>`;
  }

  /** Inline-line wordmark: [letter, start, advance]. */
  private wordmark() {
    const letters: [string, number, number][] = [
      ["L", 56.5, 24], ["I", 90.5, 12], ["M", 108.5, 47], ["E", 163.5, 25], ["L", 197, 24],
      ["I", 230, 12], ["G", 249, 40], ["H", 298.5, 36], ["T", 343, 24],
    ];
    return svg`<text class="mark" y="83.500">${letters.map(
      ([c, x, w]) => svg`<tspan x=${x} textLength=${w} lengthAdjust="spacingAndGlyphs">${c}</tspan>`
    )}</text>`;
  }

  render() {
    return html`
      <div class="page">
        <header class="top">
          <svg class="logo" viewBox="40 0 360 140">
            ${this.wordmark()}
            <text class="sub" y="118" x="91.500 141 178 223 267.500 321">Cinema</text>
          </svg>
          <nav class="nav">
            ${["Home", "What's on", "Contact", "Login / Register"].map((t) => html`<span>${t}</span>`)}
          </nav>
        </header>
        <main class="content">
          <section class="columns">
            <div class="column left">
              ${this.title("WE’D LOVE TO HEAR FROM YOU!", 600)}
              <p class="intro">
                Please feel free to get in touch using the form below. We’d love to hear your thoughts and
                answer any questions you may have!
              </p>
              <div class="form">
                ${["Your name", "Email address", "Phone Number", "Your message"].map(
                  (p) => html`<input class="field" placeholder=${p} />`
                )}
                <div class="optin"><span class="box"></span><span>Keep me up to date with Limelight news</span></div>
                <div class="actions">
                  <button class="button">Send</button>
                  <button class="button">Reset</button>
                </div>
              </div>
            </div>
            <div class="column right">
              ${this.title("LIMELIGHT MIDLOTHIAN", 450)}
              <div class="address">
                ${["66 Main street", "Edinburgh", "Midlothian", "E24 4EE"].map((l) => html`<span>${l}</span>`)}
              </div>
            </div>
          </section>
          <area-map class="map"></area-map>
        </main>
      </div>
      <div class="shade"></div>
    `;
  }
}
